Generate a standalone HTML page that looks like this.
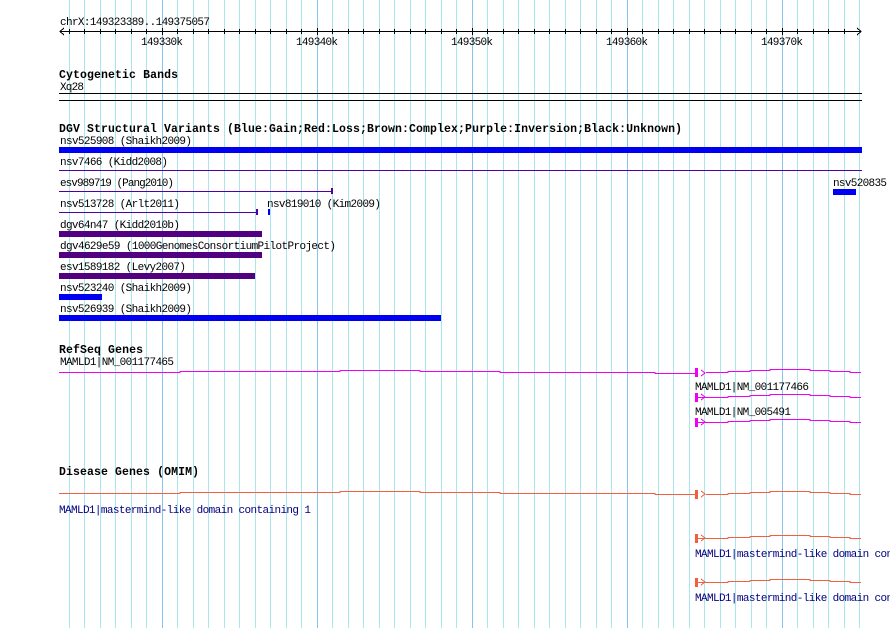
<!DOCTYPE html>
<html><head><meta charset="utf-8"><style>
html,body{margin:0;padding:0;background:#fff;}
svg{display:block;}
text{font-family:"Liberation Mono",monospace;font-size:11px;fill:#000;}
.b{font-weight:bold;font-size:11.5px;}
.n{fill:#000080;}
</style></head><body>
<svg width="890" height="628" viewBox="0 0 890 628" shape-rendering="crispEdges">
<g stroke="#a8e6ee" stroke-width="1">
<line x1="69.5" y1="0" x2="69.5" y2="628"/><line x1="84.5" y1="0" x2="84.5" y2="628"/><line x1="100.5" y1="0" x2="100.5" y2="628"/><line x1="115.5" y1="0" x2="115.5" y2="628"/><line x1="131.5" y1="0" x2="131.5" y2="628"/><line x1="146.5" y1="0" x2="146.5" y2="628"/><line x1="177.5" y1="0" x2="177.5" y2="628"/><line x1="193.5" y1="0" x2="193.5" y2="628"/><line x1="208.5" y1="0" x2="208.5" y2="628"/><line x1="224.5" y1="0" x2="224.5" y2="628"/><line x1="239.5" y1="0" x2="239.5" y2="628"/><line x1="255.5" y1="0" x2="255.5" y2="628"/><line x1="270.5" y1="0" x2="270.5" y2="628"/><line x1="286.5" y1="0" x2="286.5" y2="628"/><line x1="301.5" y1="0" x2="301.5" y2="628"/><line x1="332.5" y1="0" x2="332.5" y2="628"/><line x1="348.5" y1="0" x2="348.5" y2="628"/><line x1="363.5" y1="0" x2="363.5" y2="628"/><line x1="379.5" y1="0" x2="379.5" y2="628"/><line x1="394.5" y1="0" x2="394.5" y2="628"/><line x1="410.5" y1="0" x2="410.5" y2="628"/><line x1="425.5" y1="0" x2="425.5" y2="628"/><line x1="441.5" y1="0" x2="441.5" y2="628"/><line x1="456.5" y1="0" x2="456.5" y2="628"/><line x1="487.5" y1="0" x2="487.5" y2="628"/><line x1="503.5" y1="0" x2="503.5" y2="628"/><line x1="518.5" y1="0" x2="518.5" y2="628"/><line x1="534.5" y1="0" x2="534.5" y2="628"/><line x1="549.5" y1="0" x2="549.5" y2="628"/><line x1="565.5" y1="0" x2="565.5" y2="628"/><line x1="580.5" y1="0" x2="580.5" y2="628"/><line x1="596.5" y1="0" x2="596.5" y2="628"/><line x1="611.5" y1="0" x2="611.5" y2="628"/><line x1="642.5" y1="0" x2="642.5" y2="628"/><line x1="658.5" y1="0" x2="658.5" y2="628"/><line x1="673.5" y1="0" x2="673.5" y2="628"/><line x1="689.5" y1="0" x2="689.5" y2="628"/><line x1="704.5" y1="0" x2="704.5" y2="628"/><line x1="720.5" y1="0" x2="720.5" y2="628"/><line x1="735.5" y1="0" x2="735.5" y2="628"/><line x1="751.5" y1="0" x2="751.5" y2="628"/><line x1="766.5" y1="0" x2="766.5" y2="628"/><line x1="797.5" y1="0" x2="797.5" y2="628"/><line x1="813.5" y1="0" x2="813.5" y2="628"/><line x1="828.5" y1="0" x2="828.5" y2="628"/><line x1="844.5" y1="0" x2="844.5" y2="628"/><line x1="859.5" y1="0" x2="859.5" y2="628"/>
</g>
<g stroke="#88c4ea" stroke-width="1">
<line x1="162.5" y1="0" x2="162.5" y2="628"/><line x1="317.5" y1="0" x2="317.5" y2="628"/><line x1="472.5" y1="0" x2="472.5" y2="628"/><line x1="627.5" y1="0" x2="627.5" y2="628"/><line x1="782.5" y1="0" x2="782.5" y2="628"/>
</g>
<text x="60" y="25" textLength="150">chrX:149323389..149375057</text>
<g stroke="#000" stroke-width="1">
<line x1="60" y1="31.5" x2="861" y2="31.5"/>
<polyline points="64,28 60,31.5 64,35" fill="none"/>
<polyline points="857,28 861,31.5 857,35" fill="none"/>
</g>
<g stroke="#000">
<path d="M69.5 29v5M84.5 29v5M100.5 29v5M115.5 29v5M131.5 29v5M146.5 29v5M162.5 28v7M177.5 29v5M193.5 29v5M208.5 29v5M224.5 29v5M239.5 29v5M255.5 29v5M270.5 29v5M286.5 29v5M301.5 29v5M317.5 28v7M332.5 29v5M348.5 29v5M363.5 29v5M379.5 29v5M394.5 29v5M410.5 29v5M425.5 29v5M441.5 29v5M456.5 29v5M472.5 28v7M487.5 29v5M503.5 29v5M518.5 29v5M534.5 29v5M549.5 29v5M565.5 29v5M580.5 29v5M596.5 29v5M611.5 29v5M627.5 28v7M642.5 29v5M658.5 29v5M673.5 29v5M689.5 29v5M704.5 29v5M720.5 29v5M735.5 29v5M751.5 29v5M766.5 29v5M782.5 28v7M797.5 29v5M813.5 29v5M828.5 29v5M844.5 29v5"/>
</g>
<text x="141" y="45" textLength="42">149330k</text>
<text x="296" y="45" textLength="42">149340k</text>
<text x="451" y="45" textLength="42">149350k</text>
<text x="606" y="45" textLength="42">149360k</text>
<text x="761" y="45" textLength="42">149370k</text>
<text class="b" x="59" y="78" textLength="119">Cytogenetic Bands</text>
<text x="60" y="90" textLength="24">Xq28</text>
<rect x="59" y="93" width="803" height="1" fill="#000"/>
<rect x="59" y="100" width="803" height="1" fill="#000"/>
<text class="b" x="59" y="132" textLength="623">DGV Structural Variants (Blue:Gain;Red:Loss;Brown:Complex;Purple:Inversion;Black:Unknown)</text>
<text x="60" y="144" textLength="132">nsv525908 (Shaikh2009)</text>
<rect x="59" y="147" width="803" height="6" fill="#0000f0"/>
<text x="60" y="165" textLength="108">nsv7466 (Kidd2008)</text>
<rect x="59" y="170" width="803" height="1" fill="#5000a0"/>
<text x="60" y="186" textLength="114">esv989719 (Pang2010)</text>
<rect x="59" y="191" width="273" height="1" fill="#5000a0"/>
<rect x="331" y="188" width="2" height="6" fill="#5000a0"/>
<text x="833" y="186" textLength="54">nsv520835</text>
<rect x="833" y="189" width="23" height="6" fill="#0000f0"/>
<text x="60" y="207" textLength="120">nsv513728 (Arlt2011)</text>
<rect x="59" y="212" width="198" height="1" fill="#5000a0"/>
<rect x="256" y="209" width="2" height="6" fill="#5000a0"/>
<text x="267" y="207" textLength="114">nsv819010 (Kim2009)</text>
<rect x="268" y="209" width="2" height="6" fill="#0000f0"/>
<text x="60" y="228" textLength="120">dgv64n47 (Kidd2010b)</text>
<rect x="59" y="231" width="203" height="6" fill="#500080"/>
<text x="60" y="249" textLength="276">dgv4629e59 (1000GenomesConsortiumPilotProject)</text>
<rect x="59" y="252" width="203" height="6" fill="#500080"/>
<text x="60" y="270" textLength="126">esv1589182 (Levy2007)</text>
<rect x="59" y="273" width="196" height="6" fill="#500080"/>
<text x="60" y="291" textLength="132">nsv523240 (Shaikh2009)</text>
<rect x="59" y="294" width="43" height="6" fill="#0000f0"/>
<text x="60" y="312" textLength="132">nsv526939 (Shaikh2009)</text>
<rect x="59" y="315" width="382" height="6" fill="#0000f0"/>
<text class="b" x="59" y="353" textLength="84">RefSeq Genes</text>
<text x="60" y="365" textLength="114">MAMLD1|NM_001177465</text>
<g fill="none" stroke="#f000f0" stroke-width="1">
<polyline points="59,372.5 180,372.5 180,371.5 340,371.5 340,370.5 420,370.5 420,371.5 500,371.5 500,372.5 655,372.5 655,373.5 698,373.5"/>
<polyline points="706,372.5 728,372.5 728,371.5 750,371.5 750,370.5 770,370.5 770,369.5 810,369.5 810,370.5 830,370.5 830,371.5 850,371.5 850,372.5 861,372.5"/>
<polyline points="701,370 705,373 701,376"/>
<polyline points="698,397.5 728,397.5 728,396.5 750,396.5 750,395.5 770,395.5 770,394.5 810,394.5 810,395.5 830,395.5 830,396.5 850,396.5 850,397.5 861,397.5"/>
<polyline points="701,394 705,397 701,400"/>
<polyline points="698,422.5 728,422.5 728,421.5 750,421.5 750,420.5 770,420.5 770,419.5 810,419.5 810,420.5 830,420.5 830,421.5 850,421.5 850,422.5 861,422.5"/>
<polyline points="701,419 705,422 701,425"/>
</g>
<rect x="695" y="368" width="3" height="9" fill="#f000f0"/>
<rect x="695" y="393" width="3" height="9" fill="#f000f0"/>
<rect x="695" y="418" width="3" height="9" fill="#f000f0"/>
<text x="695" y="390" textLength="114">MAMLD1|NM_001177466</text>
<text x="695" y="415" textLength="96">MAMLD1|NM_005491</text>
<text class="b" x="59" y="475" textLength="140">Disease Genes (OMIM)</text>
<g fill="none" stroke="#f06040" stroke-width="1">
<polyline points="59,493.5 180,493.5 180,492.5 340,492.5 340,491.5 420,491.5 420,492.5 500,492.5 500,493.5 655,493.5 655,494.5 698,494.5"/>
<polyline points="706,494.5 728,494.5 728,493.5 750,493.5 750,492.5 770,492.5 770,491.5 810,491.5 810,492.5 830,492.5 830,493.5 850,493.5 850,494.5 861,494.5"/>
<polyline points="701,491 705,494 701,497"/>
<polyline points="698,538.5 728,538.5 728,537.5 750,537.5 750,536.5 770,536.5 770,535.5 810,535.5 810,536.5 830,536.5 830,537.5 850,537.5 850,538.5 861,538.5"/>
<polyline points="701,535 705,538 701,541"/>
<polyline points="698,582.5 728,582.5 728,581.5 750,581.5 750,580.5 770,580.5 770,579.5 810,579.5 810,580.5 830,580.5 830,581.5 850,581.5 850,582.5 861,582.5"/>
<polyline points="701,579 705,582 701,585"/>
</g>
<rect x="695" y="490" width="3" height="9" fill="#f06040"/>
<rect x="695" y="534" width="3" height="9" fill="#f06040"/>
<rect x="695" y="578" width="3" height="9" fill="#f06040"/>
<text class="n" x="59" y="513" textLength="252">MAMLD1|mastermind-like domain containing 1</text>
<text class="n" x="695" y="557" textLength="252">MAMLD1|mastermind-like domain containing 1</text>
<text class="n" x="695" y="601" textLength="252">MAMLD1|mastermind-like domain containing 1</text>
</svg>
</body></html>
